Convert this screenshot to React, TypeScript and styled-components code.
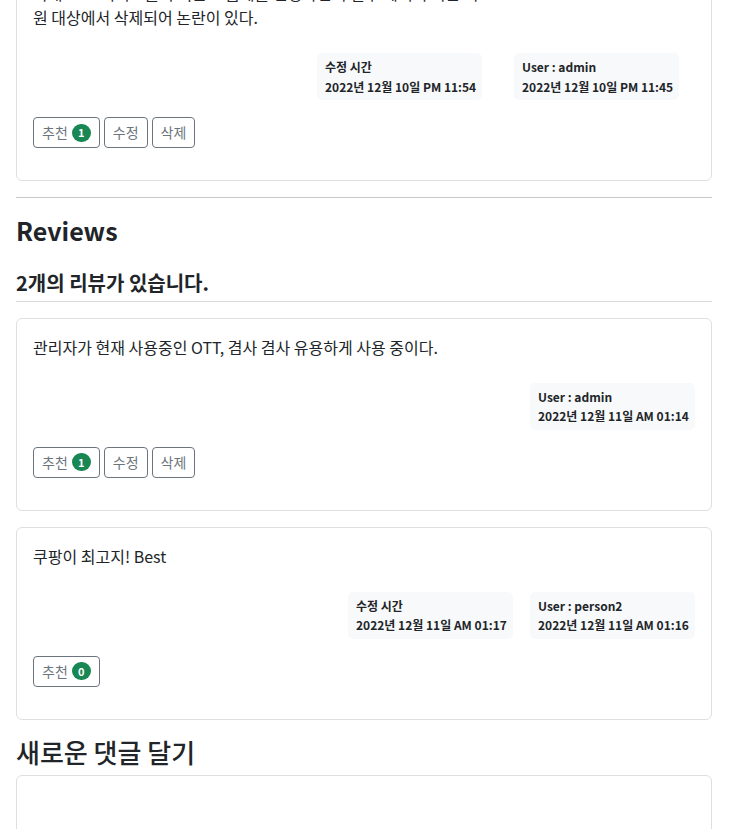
import React from "react";
import styled, { createGlobalStyle } from "styled-components";

const Global = createGlobalStyle`
  html, body { margin: 0; padding: 0; background: #fff; }
  body {
    font-family: "Noto Sans CJK KR", "Noto Sans", sans-serif;
    color: #212529;
    font-size: 16px;
    line-height: 1.5;
    overflow: hidden;
  }
  * { box-sizing: border-box; }
`;

const Page = styled.div`
  padding: 0 20px 0 16px;
  margin-top: -36px;
`;

const Card = styled.div`
  border: 1px solid #dfdfdf;
  border-radius: 6px;
  padding: 16px 16px 32px;
  margin-bottom: 16px;
`;

const Body = styled.p`
  margin: 0 0 24px;
  font-size: 16px;
  line-height: 24px;
`;

const MetaRow = styled.div<{ $gap: number; $pad: number }>`
  display: flex;
  justify-content: flex-end;
  gap: ${(p) => p.$gap}px;
  padding-right: ${(p) => p.$pad}px;
  margin-bottom: 17px;
`;

const MetaBox = styled.div`
  background: #f8f9fa;
  border-radius: 5px;
  padding: 4px 8px;
  width: 165px;
  font-size: 12px;
  font-weight: 700;
  line-height: 19.5px;
  white-space: nowrap;
`;

const Actions = styled.div`
  display: flex;
  gap: 4px;
`;

const Btn = styled.button`
  display: inline-flex;
  align-items: center;
  gap: 4px;
  height: 31px;
  padding: 0 8px;
  border: 1px solid #6c757d;
  border-radius: 4px;
  background: #fff;
  color: #6c757d;
  font-family: inherit;
  font-size: 14px;
  line-height: 21px;
`;

const Badge = styled.span`
  display: inline-flex;
  align-items: center;
  justify-content: center;
  min-width: 19px;
  height: 18px;
  padding: 0 6px;
  border-radius: 10px;
  background: #198754;
  color: #fff;
  font-size: 11px;
  font-weight: 700;
  line-height: 1;
`;

const Rule = styled.hr`
  border: 0;
  border-top: 1px solid #c8c9ca;
  margin: 0 0 16px;
`;

const H2 = styled.h2`
  margin: 0 0 8px;
  font-size: 25px;
  line-height: 33.6px;
  font-weight: 600;
`;

const H4 = styled.h4`
  margin: 23px 0 16px;
  padding-bottom: 6px;
  border-bottom: 1px solid #d9dadb;
  font-size: 20px;
  line-height: 24px;
  font-weight: 600;
`;

const H3 = styled.h3`
  margin: 0 0 8px;
  font-size: 26px;
  line-height: 31px;
  font-weight: 500;
`;

const FormCard = styled.div`
  border: 1px solid #dfdfdf;
  border-radius: 6px;
  height: 160px;
`;

type Meta = { title: string; date: string };

function Review(props: {
  text: React.ReactNode;
  metas: Meta[];
  gap: number;
  pad: number;
  likes: number;
  editable: boolean;
}) {
  return (
    <Card>
      <Body>{props.text}</Body>
      <MetaRow $gap={props.gap} $pad={props.pad}>
        {props.metas.map((m) => (
          <MetaBox key={m.title + m.date}>
            <div>{m.title}</div>
            <div>{m.date}</div>
          </MetaBox>
        ))}
      </MetaRow>
      <Actions>
        <Btn>
          추천<Badge>{props.likes}</Badge>
        </Btn>
        {props.editable && <Btn>수정</Btn>}
        {props.editable && <Btn>삭제</Btn>}
      </Actions>
    </Card>
  );
}

export default function App() {
  return (
    <>
      <Global />
      <Page>
        <Review
          text={
            <>
              국내 OTT 서비스들이 최근 요금제를 변경하면서 일부 혜택이 기존 회
              <br />
              원 대상에서 삭제되어 논란이 있다.
            </>
          }
          metas={[
            { title: "수정 시간", date: "2022년 12월 10일 PM 11:54" },
            { title: "User : admin", date: "2022년 12월 10일 PM 11:45" },
          ]}
          gap={32}
          pad={16}
          likes={1}
          editable
        />
        <Rule />
        <H2>Reviews</H2>
        <H4>2개의 리뷰가 있습니다.</H4>
        <Review
          text="관리자가 현재 사용중인 OTT, 겸사 겸사 유용하게 사용 중이다."
          metas={[{ title: "User : admin", date: "2022년 12월 11일 AM 01:14" }]}
          gap={17}
          pad={0}
          likes={1}
          editable
        />
        <Review
          text="쿠팡이 최고지! Best"
          metas={[
            { title: "수정 시간", date: "2022년 12월 11일 AM 01:17" },
            { title: "User : person2", date: "2022년 12월 11일 AM 01:16" },
          ]}
          gap={17}
          pad={0}
          likes={0}
          editable={false}
        />
        <H3>새로운 댓글 달기</H3>
        <FormCard />
      </Page>
    </>
  );
}
